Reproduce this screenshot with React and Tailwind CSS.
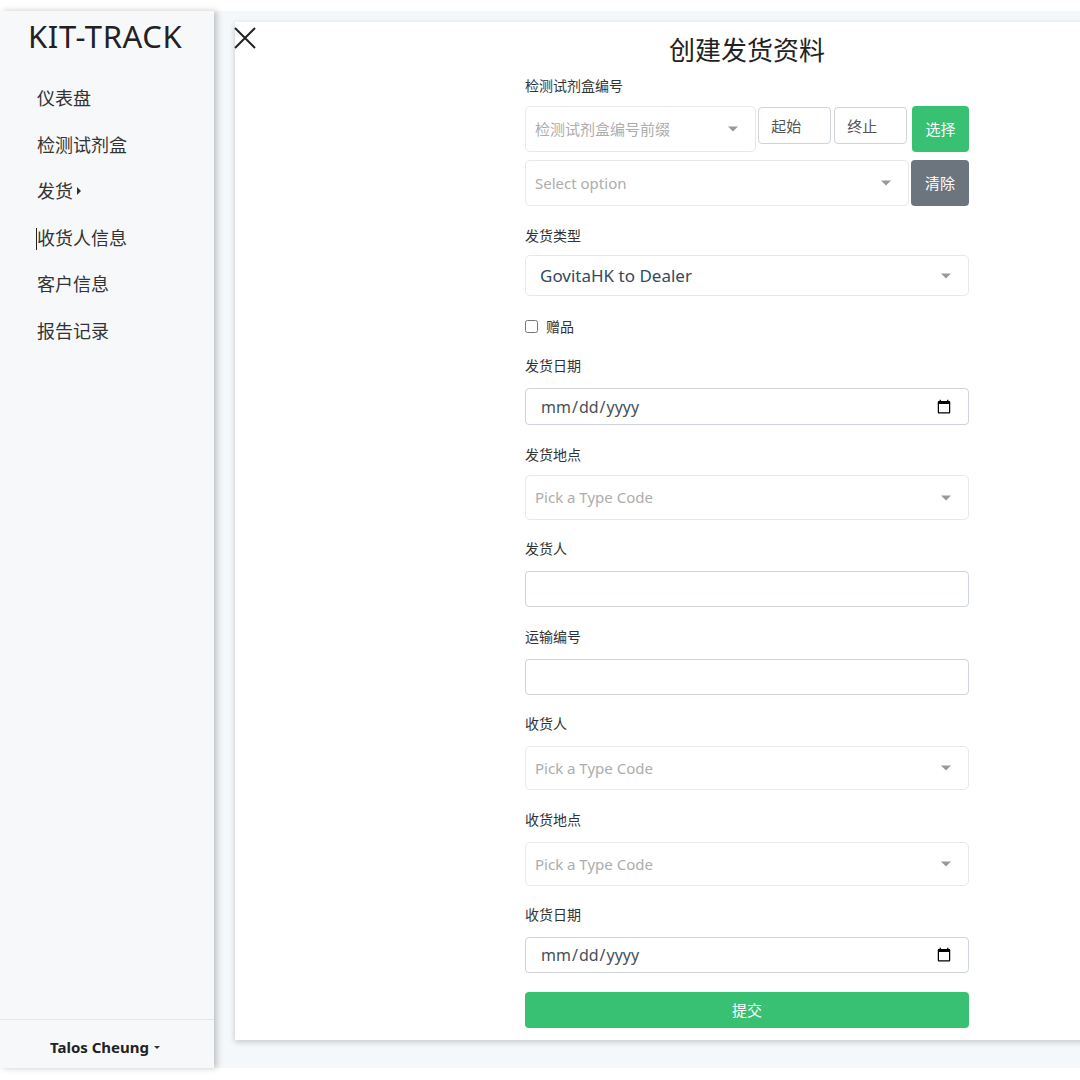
import React from 'react';

const Caret = () => (
  <span className="absolute right-[17px] top-1/2 -translate-y-1/2 w-0 h-0 border-l-[5px] border-r-[5px] border-t-[5px] border-l-transparent border-r-transparent border-t-[#999]" />
);

const Multi = ({ text, value, className = '' }) => (
  <div className={`relative bg-white border border-[#e8e8e8] rounded-[5px] flex items-center ${className}`}>
    {value ? (
      <span className="pl-[14px] text-[17px] text-[#35495e]">{value}</span>
    ) : (
      <span className="pl-[9px] text-[15px] text-[#adadad]">{text}</span>
    )}
    <Caret />
  </div>
);

const Label = ({ children, className = '' }) => (
  <div className={`text-[14px] leading-[20px] text-[#333] ${className}`}>{children}</div>
);

const TextInput = ({ className = '' }) => (
  <input type="text" className={`w-full h-[36px] bg-white border border-[#ced4da] rounded-[4px] px-3 ${className}`} />
);

const DateInput = ({ className = '', h = 'h-[37px]' }) => (
  <input
    type="date"
    className={`w-full ${h} bg-white border border-[#ced4da] rounded-[4px] pl-[14px] pr-[14px] text-[16px] text-[#495057] ${className}`}
  />
);

export default function App() {
  const nav = ['仪表盘', '检测试剂盒', '发货', '收货人信息', '客户信息', '报告记录'];

  return (
    <div className="w-full h-[1080px] bg-white pt-[11px] overflow-hidden" style={{ fontFamily: '"Noto Sans", "Noto Sans CJK SC", sans-serif' }}>
      <div className="flex h-[1057px]">
        {/* Sidebar */}
        <aside className="relative z-10 w-[214px] shrink-0 bg-[#f7f8fa] shadow-[3px_0_6px_rgba(0,0,0,0.22)] flex flex-col">
          <div className="pl-[28px] pt-[5px] text-[31px] leading-[40px] text-[#222] tracking-[0.6px]">KIT-TRACK</div>
          <nav className="pl-[37px] pt-[32px] flex flex-col gap-[26.5px]">
            {nav.map((n) => (
              <div key={n} className="relative text-[18px] leading-[20px] text-[#333] flex items-center">
                {n === '收货人信息' && <span className="absolute -left-[1px] top-0 h-[22px] w-[1px] bg-[#222]" />}
                {n}
                {n === '发货' && (
                  <span className="ml-[4px] w-0 h-0 border-t-[4px] border-b-[4px] border-l-[4px] border-t-transparent border-b-transparent border-l-[#333]" />
                )}
              </div>
            ))}
          </nav>
          <div className="mt-auto border-t border-[#e6e6e6] h-[49px] pt-[6px] flex items-center justify-center pr-[4px]">
            <span className="text-[15px] font-bold text-[#222]">Talos Cheung</span>
            <span className="ml-[5px] w-0 h-0 border-l-[3px] border-r-[3px] border-t-[3px] border-l-transparent border-r-transparent border-t-[#333]" />
          </div>
        </aside>

        {/* Main */}
        <main className="flex-1 bg-[#f5f8fb] pl-[21px] pt-[11px] min-w-0">
          <div className="relative bg-white w-[1100px] h-[1018px] shadow-[0_2px_6px_rgba(0,0,0,0.2)] pt-[12px] pl-[290px]">
            <button className="absolute left-[-1px] top-[5px] w-[22px] h-[22px]">
              <svg viewBox="0 0 22 22" width="22" height="22" fill="none" stroke="#222" strokeWidth="2">
                <path d="M1 1 L21 21 M21 1 L1 21" />
              </svg>
            </button>

            <div className="w-[444px] flex flex-col">
              <h1 className="text-center text-[26px] leading-[32px] text-[#222]">创建发货资料</h1>

              <Label className="mt-[10px]">检测试剂盒编号</Label>
              <div className="mt-[10px] flex items-start h-[46px]">
                <Multi text="检测试剂盒编号前缀" className="w-[232px] h-[46px] text-[14px]" />
                <input placeholder="起始" className="ml-[2px] mt-[1px] w-[73px] h-[37px] border border-[#ced4da] rounded-[4px] px-[12px] text-[15px] placeholder:text-[#555]" />
                <input placeholder="终止" className="ml-[3px] mt-[1px] w-[73px] h-[37px] border border-[#ced4da] rounded-[4px] px-[12px] text-[15px] placeholder:text-[#555]" />
                <button className="ml-[5px] w-[57px] h-[46px] bg-[#38c172] rounded-[4px] text-white text-[15px]">选择</button>
              </div>
              <div className="mt-[8px] flex h-[46px]">
                <Multi text="Select option" className="w-[384px] h-[46px]" />
                <button className="ml-[2px] w-[58px] h-[46px] bg-[#6c757d] rounded-[4px] text-white text-[15px]">清除</button>
              </div>

              <Label className="mt-[20px]">发货类型</Label>
              <Multi value="GovitaHK to Dealer" className="mt-[9px] h-[41px]" />

              <label className="mt-[20px] flex items-center h-[20px] text-[14px] text-[#333]">
                <input type="checkbox" className="w-[13px] h-[13px] mr-[8px]" />
                赠品
              </label>

              <Label className="mt-[20px]">发货日期</Label>
              <DateInput className="mt-[12px]" />

              <Label className="mt-[20px]">发货地点</Label>
              <Multi text="Pick a Type Code" className="mt-[10px] h-[45px]" />

              <Label className="mt-[19px]">发货人</Label>
              <TextInput className="mt-[12px]" />

              <Label className="mt-[20px]">运输编号</Label>
              <TextInput className="mt-[12px]" />

              <Label className="mt-[19px]">收货人</Label>
              <Multi text="Pick a Type Code" className="mt-[12px] h-[44px]" />

              <Label className="mt-[20px]">收货地点</Label>
              <Multi text="Pick a Type Code" className="mt-[12px] h-[44px]" />

              <Label className="mt-[19px]">收货日期</Label>
              <DateInput className="mt-[12px]" h="h-[36px]" />

              <button className="mt-[19px] h-[36px] w-full bg-[#38c172] rounded-[4px] text-white text-[15px]">提交</button>
            </div>
          </div>
        </main>
      </div>
    </div>
  );
}
